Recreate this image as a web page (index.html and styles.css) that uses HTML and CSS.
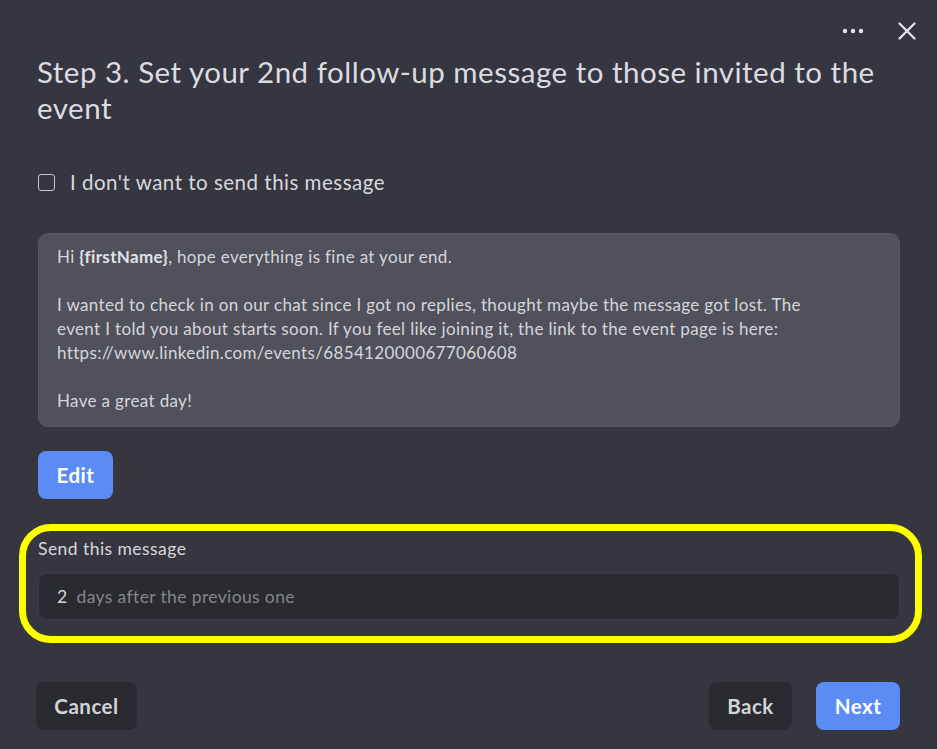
FILE: index.html
```html
<!DOCTYPE html>
<html>
<head>
<meta charset="utf-8">
<link rel="stylesheet" href="styles.css">
</head>
<body>
<div class="modal">
  <div class="topbar">
    <button class="icon-btn dots" aria-label="More">
      <svg width="22" height="6" viewBox="0 0 22 6"><circle cx="3" cy="3" r="2.2" fill="#e4e4e8"/><circle cx="11" cy="3" r="2.2" fill="#e4e4e8"/><circle cx="19" cy="3" r="2.2" fill="#e4e4e8"/></svg>
    </button>
    <button class="icon-btn close" aria-label="Close">
      <svg width="18" height="18" viewBox="0 0 18 18"><path d="M1.5 1.5 L16.5 16.5 M16.5 1.5 L1.5 16.5" stroke="#e4e4e8" stroke-width="2.3" stroke-linecap="round"/></svg>
    </button>
  </div>
  <h1 class="title">Step 3. Set your 2nd follow-up message to those invited to the event</h1>
  <label class="check-row">
    <span class="checkbox"></span>
    <span>I don't want to send this message</span>
  </label>
  <div class="message">
    <p>Hi <b>{firstName}</b>, hope everything is fine at your end.</p>
    <p>I wanted to check in on our chat since I got no replies, thought maybe the message got lost. The event I told you about starts soon. If you feel like joining it, the link to the event page is here: https://www.linkedin.com/events/6854120000677060608</p>
    <p>Have a great day!</p>
  </div>
  <button class="btn btn-primary edit">Edit</button>
  <div class="send-section">
    <div class="send-label">Send this message</div>
    <div class="input">
      <span class="num">2</span>
      <span class="placeholder">days after the previous one</span>
    </div>
  </div>
  <div class="footer">
    <button class="btn btn-dark cancel">Cancel</button>
    <div class="footer-right">
      <button class="btn btn-dark back">Back</button>
      <button class="btn btn-primary next">Next</button>
    </div>
  </div>
</div>
</body>
</html>
```

FILE: styles.css
```css
* { box-sizing: border-box; }
html, body {
  margin: 0;
  padding: 0;
  background: #35363f;
  width: 937px;
  height: 749px;
  overflow: hidden;
}
body {
  font-family: Lato, "Open Sans", sans-serif;
  color: #d8d8dc;
}
.modal {
  display: flex;
  flex-direction: column;
  padding: 20px 37px 0 38px;
  height: 749px;
}
.topbar {
  display: flex;
  justify-content: flex-end;
  align-items: center;
  gap: 34px;
  height: 22px;
  margin-right: -16px;
}
.icon-btn {
  background: none;
  border: none;
  padding: 0;
  display: flex;
  align-items: center;
  cursor: pointer;
}
.title {
  margin: 12px 0 0 -1px;
  font-size: 29.5px;
  line-height: 36px;
  font-weight: 400;
  color: #dcdce0;
  letter-spacing: 0.5px;
}
.check-row {
  display: flex;
  align-items: center;
  gap: 15px;
  margin-top: 44px;
  font-size: 20.5px;
  line-height: 24px;
  letter-spacing: 0.5px;
  color: #d8d8dc;
}
.checkbox {
  width: 17px;
  height: 17px;
  border: 1.5px solid #c8c8cc;
  border-radius: 3px;
  flex: none;
}
.message {
  margin-top: 39px;
  background: #50515b;
  border: 1px solid #575862;
  border-radius: 10px;
  padding: 11px 60px 13px 18px;
  font-size: 17px;
  line-height: 24px;
  letter-spacing: 0.35px;
  color: #d6d6da;
}
.message p { margin: 0 0 24px; }
.message p:last-child { margin: 0; }
.message b { font-weight: 700; color: #e2e2e6; }
.btn {
  font-family: Lato, "Open Sans", sans-serif;
  font-weight: 700;
  font-size: 20.5px;
  letter-spacing: 0.5px;
  height: 48px;
  border: none;
  border-radius: 8px;
  padding: 0;
  cursor: pointer;
}
.btn-primary { background: #5b8cf5; color: #ffffff; }
.btn-dark { background: #2a2b30; color: #d4d4d8; }
.edit {
  align-self: flex-start;
  margin-top: 24px;
  width: 75px;
}
.send-section {
  position: relative;
  margin-top: 40px;
}
.send-section::before {
  content: "";
  position: absolute;
  left: -19px;
  right: -22px;
  top: -15px;
  bottom: -23px;
  border: 7px solid #ffff00;
  border-radius: 32px;
  pointer-events: none;
}
.send-label {
  font-size: 17.5px;
  line-height: 20px;
  letter-spacing: 0.45px;
  color: #d8d8dc;
}
.input {
  margin-top: 14px;
  height: 47px;
  background: #2a2b30;
  border: 1px solid #3c3d45;
  border-radius: 8px;
  display: flex;
  align-items: center;
  padding: 0 18px;
  gap: 9px;
  font-size: 17.5px;
  letter-spacing: 0.37px;
}
.num { color: #d4d4d8; }
.placeholder { color: #85868d; }
.footer {
  margin-top: 62px;
  display: flex;
  justify-content: space-between;
  margin-left: -2px;
}
.cancel { width: 101px; }
.footer-right {
  display: flex;
  gap: 24px;
}
.back { width: 83px; }
.next { width: 84px; }
```
